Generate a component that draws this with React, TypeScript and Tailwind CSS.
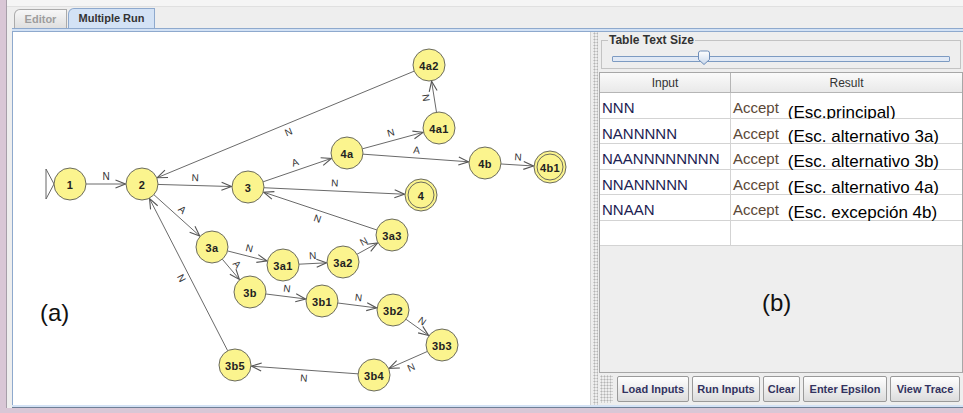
import React from "react";

type GNode = { id: string; x: number; y: number; final?: boolean };

const R = 16;

const NODES: GNode[] = [
  { id: "1", x: 70, y: 184 },
  { id: "2", x: 142, y: 184 },
  { id: "3", x: 248, y: 187 },
  { id: "4", x: 421, y: 195, final: true },
  { id: "4a", x: 347, y: 153 },
  { id: "4a1", x: 439, y: 128 },
  { id: "4a2", x: 429, y: 65 },
  { id: "4b", x: 485, y: 163 },
  { id: "4b1", x: 550, y: 167, final: true },
  { id: "3a", x: 212, y: 247 },
  { id: "3a1", x: 283, y: 265 },
  { id: "3a2", x: 343, y: 262 },
  { id: "3a3", x: 392, y: 235 },
  { id: "3b", x: 250, y: 292 },
  { id: "3b1", x: 322, y: 301 },
  { id: "3b2", x: 393, y: 310 },
  { id: "3b3", x: 442, y: 345 },
  { id: "3b4", x: 374, y: 375 },
  { id: "3b5", x: 235, y: 365 },
];

const EDGES: [string, string, string][] = [
  ["1", "2", "N"],
  ["2", "3", "N"],
  ["3", "4a", "A"],
  ["3", "4", "N"],
  ["4a", "4a1", "N"],
  ["4a1", "4a2", "N"],
  ["4a", "4b", "A"],
  ["4b", "4b1", "N"],
  ["4a2", "2", "N"],
  ["3a3", "3", "N"],
  ["2", "3a", "A"],
  ["3a", "3a1", "N"],
  ["3a", "3b", "A"],
  ["3a1", "3a2", "N"],
  ["3a2", "3a3", "N"],
  ["3b", "3b1", "N"],
  ["3b1", "3b2", "N"],
  ["3b2", "3b3", "N"],
  ["3b3", "3b4", "N"],
  ["3b4", "3b5", "N"],
  ["3b5", "2", "N"],
];

const ROWS = [
  { input: "NNN", note: "(Esc.principal)", drop: "align-[-5px]" },
  { input: "NANNNNN", note: "(Esc. alternativo 3a)", drop: "align-[-3px]" },
  { input: "NAANNNNNNNN", note: "(Esc. alternativo 3b)", drop: "align-[-3px]" },
  { input: "NNANNNNN", note: "(Esc. alternativo 4a)", drop: "align-[-3px]" },
  { input: "NNAAN", note: "(Esc. excepción 4b)", drop: "align-[-3px]" },
];

const BUTTONS = [
  { label: "Load Inputs", w: "w-[72px]" },
  { label: "Run Inputs", w: "w-[68px]" },
  { label: "Clear", w: "w-[37px]" },
  { label: "Enter Epsilon", w: "w-[84px]" },
  { label: "View Trace", w: "w-[70px]" },
];

const FONT = "Liberation Sans, Arial, sans-serif";

const Edge = ({ a, b, label }: { a: GNode; b: GNode; label: string }) => {
  const dx = b.x - a.x;
  const dy = b.y - a.y;
  const len = Math.hypot(dx, dy);
  const ux = dx / len;
  const uy = dy / len;
  const sx = a.x + ux * R;
  const sy = a.y + uy * R;
  const ex = b.x - ux * (R + 0.5);
  const ey = b.y - uy * (R + 0.5);
  const bx = ex - ux * 10;
  const by = ey - uy * 10;
  const p1 = `${bx - uy * 4},${by + ux * 4}`;
  const p2 = `${bx + uy * 4},${by - ux * 4}`;
  // label sits on the left side of the travel direction
  const lx = (a.x + b.x) / 2 + uy * 8;
  const ly = (a.y + b.y) / 2 - ux * 8;
  let ang = (Math.atan2(dy, dx) * 180) / Math.PI;
  if (ang > 90) ang -= 180;
  if (ang <= -90) ang += 180;

  return (
    <g>
      <line x1={sx} y1={sy} x2={ex} y2={ey} stroke="#6a6a6a" strokeWidth={1} />
      <polyline
        points={`${p1} ${ex},${ey} ${p2}`}
        fill="none"
        stroke="#555"
        strokeWidth={1.1}
      />
      <text
        x={lx}
        y={ly}
        transform={`rotate(${ang} ${lx} ${ly})`}
        textAnchor="middle"
        dominantBaseline="central"
        fontSize={10}
        fontFamily={FONT}
        fill="#333"
      >
        {label}
      </text>
    </g>
  );
};

const Graph = () => {
  const byId: Record<string, GNode> = Object.fromEntries(
    NODES.map((n) => [n.id, n])
  );

  return (
    <svg width={577} height={373} viewBox="13 32 577 373" className="block">
      {/* initial state marker */}
      <polygon points="46,169 54,184 46,199" fill="none" stroke="#666" />

      {EDGES.map(([f, t, l]) => (
        <Edge key={f + "-" + t} a={byId[f]} b={byId[t]} label={l} />
      ))}

      {NODES.map((n) => (
        <g key={n.id}>
          <circle cx={n.x} cy={n.y} r={R} fill="#fbf48e" stroke="#6b6b5e" />
          {n.final && (
            <circle cx={n.x} cy={n.y} r={R - 3} fill="none" stroke="#6b6b5e" />
          )}
          <text
            x={n.x}
            y={n.y + 0.5}
            textAnchor="middle"
            dominantBaseline="central"
            fontSize={11}
            fontWeight="bold"
            fontFamily={FONT}
            fill="#222"
            letterSpacing={0.3}
          >
            {n.id}
          </text>
        </g>
      ))}

      <text x={40} y={321} fontSize={24} fontFamily={FONT} fill="#111">
        (a)
      </text>
    </svg>
  );
};

export default function App() {
  return (
    <div className="w-[963px] h-[413px] overflow-hidden bg-[#d9c7d6] font-['Liberation_Sans',Arial,sans-serif] flex flex-col">
      <div className="flex h-[408px] shrink-0">
        <div className="w-[6px] shrink-0" />
        <div className="flex-1 flex flex-col bg-[#eeeeee] border-l border-[#a79fa9]">
          <div className="h-[7px] shrink-0 bg-[#f5f5f5] border-b border-[#e0e0e0]" />

          {/* tabs */}
          <div className="h-[21px] shrink-0 flex items-end gap-[1px] pl-[7px]">
            <div className="h-[19px] w-[53px] flex items-center justify-center rounded-tl-[6px] border border-b-0 border-[#ababab] bg-gradient-to-b from-[#f7f7f7] to-[#dfdfdf] text-[11px] font-bold text-[#9d9d9d]">
              Editor
            </div>
            <div className="h-[20px] w-[87px] flex items-center justify-center rounded-tl-[6px] border border-b-0 border-[#8ea9cd] bg-[#d3e2f5] text-[11px] font-bold text-[#333333]">
              Multiple Run
            </div>
          </div>
          <div className="h-[4px] shrink-0 ml-[5px] border-y border-[#8ea9cd] bg-[#d3e2f5]" />

          <div className="flex h-[373px] shrink-0 ml-[5px] border-l border-[#8ea9cd]">
            <div className="w-[577px] shrink-0 bg-white">
              <Graph />
            </div>

            {/* splitter */}
            <div className="w-[9px] shrink-0 flex border-l border-[#d2d2d2]">
              <div className="w-[5px] ml-[2px] h-full bg-[radial-gradient(circle,#b4b4b4_0.8px,transparent_1.2px)] bg-[length:3px_3px]" />
            </div>

            {/* right side */}
            <div className="w-[364px] shrink-0 flex flex-col">
              <fieldset className="mt-[1px] mx-[2px] h-[36px] shrink-0 border border-[#c3c3c3] px-[10px]">
                <legend className="ml-[-4px] px-[1px] text-[12px] font-bold text-[#333333] leading-[14px]">
                  Table Text Size
                </legend>
                <div className="relative mt-[9px] h-[6px] border border-[#7d9bc2] bg-[#e1e9f5] rounded-[1px]">
                  <svg
                    width={14}
                    height={16}
                    viewBox="0 0 14 16"
                    className="absolute left-[84px] top-[-7px]"
                  >
                    <defs>
                      <linearGradient id="thumb" x1="0" y1="0" x2="0" y2="1">
                        <stop offset="0" stopColor="#ffffff" />
                        <stop offset="1" stopColor="#c9d8ec" />
                      </linearGradient>
                    </defs>
                    <path
                      d="M1.5 3 Q1.5 1 3.5 1 H10.5 Q12.5 1 12.5 3 V9.5 L7 14.5 L1.5 9.5 Z"
                      fill="url(#thumb)"
                      stroke="#6e8db8"
                    />
                  </svg>
                </div>
              </fieldset>

              <div className="mt-[3px] h-[301px] shrink-0 border border-[#a7a7a7] bg-[#eeeeee] flex flex-col">
                <div className="grid grid-cols-[131px_1fr] h-[20px] shrink-0 bg-gradient-to-b from-[#fafafa] to-[#e9e9e9] border-b border-[#b5b5b5] text-[12px] text-[#333333]">
                  <div className="flex items-center justify-center border-r border-[#b5b5b5]">
                    Input
                  </div>
                  <div className="flex items-center justify-center">Result</div>
                </div>

                {ROWS.map((r) => (
                  <div
                    key={r.input}
                    className="grid grid-cols-[131px_1fr] h-[25.5px] shrink-0 bg-white border-b border-[#d3d3d3] text-[15px] leading-[17px]"
                  >
                    <div className="pl-[2px] pt-[6px] border-r border-[#d3d3d3] text-[#1c2252]">
                      {r.input}
                    </div>
                    <div className="pl-[2px] pt-[6px] whitespace-nowrap">
                      <span className="text-[#5b4837]">Accept</span>
                      <span className={`ml-[9px] text-[17px] text-black ${r.drop}`}>
                        {r.note}
                      </span>
                    </div>
                  </div>
                ))}
                <div className="grid grid-cols-[131px_1fr] h-[25.5px] shrink-0 bg-white border-b border-[#d3d3d3]">
                  <div className="border-r border-[#d3d3d3]" />
                  <div />
                </div>

                <div className="flex-1 pl-[162px] pt-[43px] text-[24px] leading-[28px] text-[#111]">
                  (b)
                </div>
              </div>

              {/* button bar */}
              <div className="flex-1 flex items-center">
                <div className="ml-[1px] w-[13px] h-[28px] bg-[radial-gradient(circle,#b4b4b4_0.8px,transparent_1.2px)] bg-[length:3px_3px]" />
                <div className="ml-[4px] flex gap-[3px]">
                  {BUTTONS.map((b) => (
                    <button
                      key={b.label}
                      className={`${b.w} h-[26px] flex items-center justify-center rounded-[2px] border border-[#9a9a9a] bg-gradient-to-b from-[#ffffff] to-[#dcdcdc] text-[11px] font-bold text-[#33335f] whitespace-nowrap`}
                    >
                      {b.label}
                    </button>
                  ))}
                </div>
              </div>
            </div>
          </div>

          <div className="h-[3px] shrink-0 ml-[5px] bg-[#d3e2f5] border-b border-[#6f7f96]" />
        </div>
      </div>
      <div className="h-[5px] shrink-0" />
    </div>
  );
}
